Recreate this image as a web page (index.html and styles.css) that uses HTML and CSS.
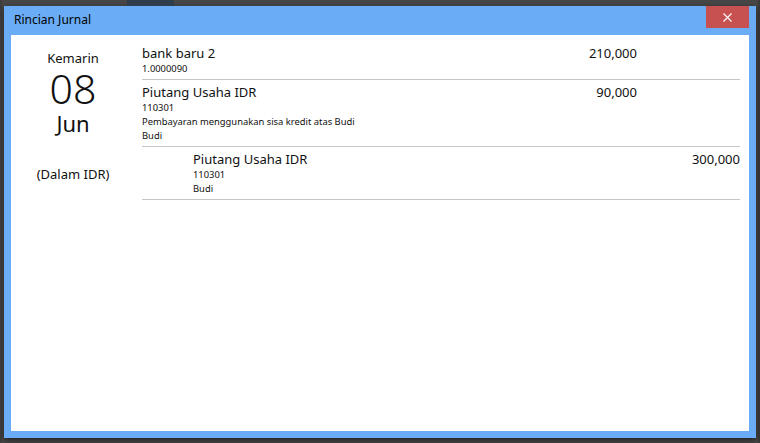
FILE: index.html
```html
<!DOCTYPE html>
<html lang="id">
<head>
<meta charset="utf-8">
<title>Rincian Jurnal</title>
<link rel="stylesheet" href="styles.css">
</head>
<body>
<div class="desktop">
  <div class="bg-tab"></div>
  <div class="window">
    <div class="titlebar">
      <span class="title">Rincian Jurnal</span>
      <div class="close">
        <svg width="9" height="9" viewBox="0 0 9 9"><path d="M0.5 0.5 L8.5 8.5 M8.5 0.5 L0.5 8.5" stroke="#fff" stroke-width="1.1" fill="none"/></svg>
      </div>
    </div>
    <div class="content">
      <div class="date-col">
        <div class="day-label">Kemarin</div>
        <div class="day-num">08</div>
        <div class="month">Jun</div>
        <div class="currency">(Dalam IDR)</div>
      </div>
      <div class="entries">
        <div class="entry">
          <div class="info">
            <div class="acc-name">bank baru 2</div>
            <div class="small">1.0000090</div>
          </div>
          <div class="debit">210,000</div>
          <div class="credit"></div>
        </div>
        <div class="entry">
          <div class="info">
            <div class="acc-name">Piutang Usaha IDR</div>
            <div class="small">110301</div>
            <div class="small">Pembayaran menggunakan sisa kredit atas Budi</div>
            <div class="small">Budi</div>
          </div>
          <div class="debit">90,000</div>
          <div class="credit"></div>
        </div>
        <div class="entry">
          <div class="info indent">
            <div class="acc-name">Piutang Usaha IDR</div>
            <div class="small">110301</div>
            <div class="small">Budi</div>
          </div>
          <div class="debit"></div>
          <div class="credit">300,000</div>
        </div>
      </div>
    </div>
  </div>
</div>
</body>
</html>
```
FILE: styles.css
```css
html, body {
  margin: 0;
  padding: 0;
}
body {
  width: 760px;
  height: 443px;
  overflow: hidden;
  background: #474747;
  font-family: "Noto Sans", "Open Sans", sans-serif;
  color: #111;
}
.desktop {
  position: relative;
  width: 760px;
  height: 443px;
  padding-top: 6px;
  padding-left: 4px;
  box-sizing: border-box;
  background: linear-gradient(to right, #3f3f3f 0, #3f3f3f 2px, #474747 2px, #474747 758px, #3a3a3a 758px);
}
.bg-tab {
  position: absolute;
  left: 127px;
  top: 0;
  width: 47px;
  height: 6px;
  background: #2f3c4a;
}
.window {
  width: 752px;
  height: 432px;
  background: #6aacf5;
  box-shadow: 0 2px 6px rgba(0, 0, 0, 0.55);
  display: flex;
  flex-direction: column;
}
.titlebar {
  height: 29px;
  display: flex;
  align-items: flex-start;
  justify-content: space-between;
  padding: 0 7px 0 10px;
}
.title {
  font-size: 12px;
  line-height: 16px;
  margin-top: 6px;
  color: #000;
}
.close {
  width: 43px;
  height: 22px;
  background: #c75050;
  display: flex;
  align-items: center;
  justify-content: center;
}
.content {
  flex: 1;
  margin: 0 7px 7px 7px;
  background: #fff;
  display: flex;
  padding: 6px 9px 0 0;
}
.date-col {
  width: 124px;
  margin-right: 7px;
  display: flex;
  flex-direction: column;
  align-items: center;
  padding-top: 9px;
}
.day-label {
  font-size: 13px;
  line-height: 16px;
}
.day-num {
  font-size: 41px;
  line-height: 43px;
  margin-top: 1px;
  font-weight: 300;
}
.month {
  font-size: 22px;
  line-height: 26px;
  margin-top: 0;
}
.currency {
  font-size: 13px;
  line-height: 17px;
  margin-top: 30px;
}
.entries {
  flex: 1;
  display: flex;
  flex-direction: column;
}
.entry {
  display: grid;
  grid-template-columns: 1fr 100px 103px;
  padding: 4px 0 3px 0;
  border-bottom: 1px solid #c6c6c6;
}
.info.indent {
  padding-left: 51px;
}
.acc-name, .debit, .credit {
  font-size: 13px;
  line-height: 17px;
}
.debit, .credit {
  text-align: right;
}
.small {
  font-size: 9.4px;
  line-height: 14px;
}
```
